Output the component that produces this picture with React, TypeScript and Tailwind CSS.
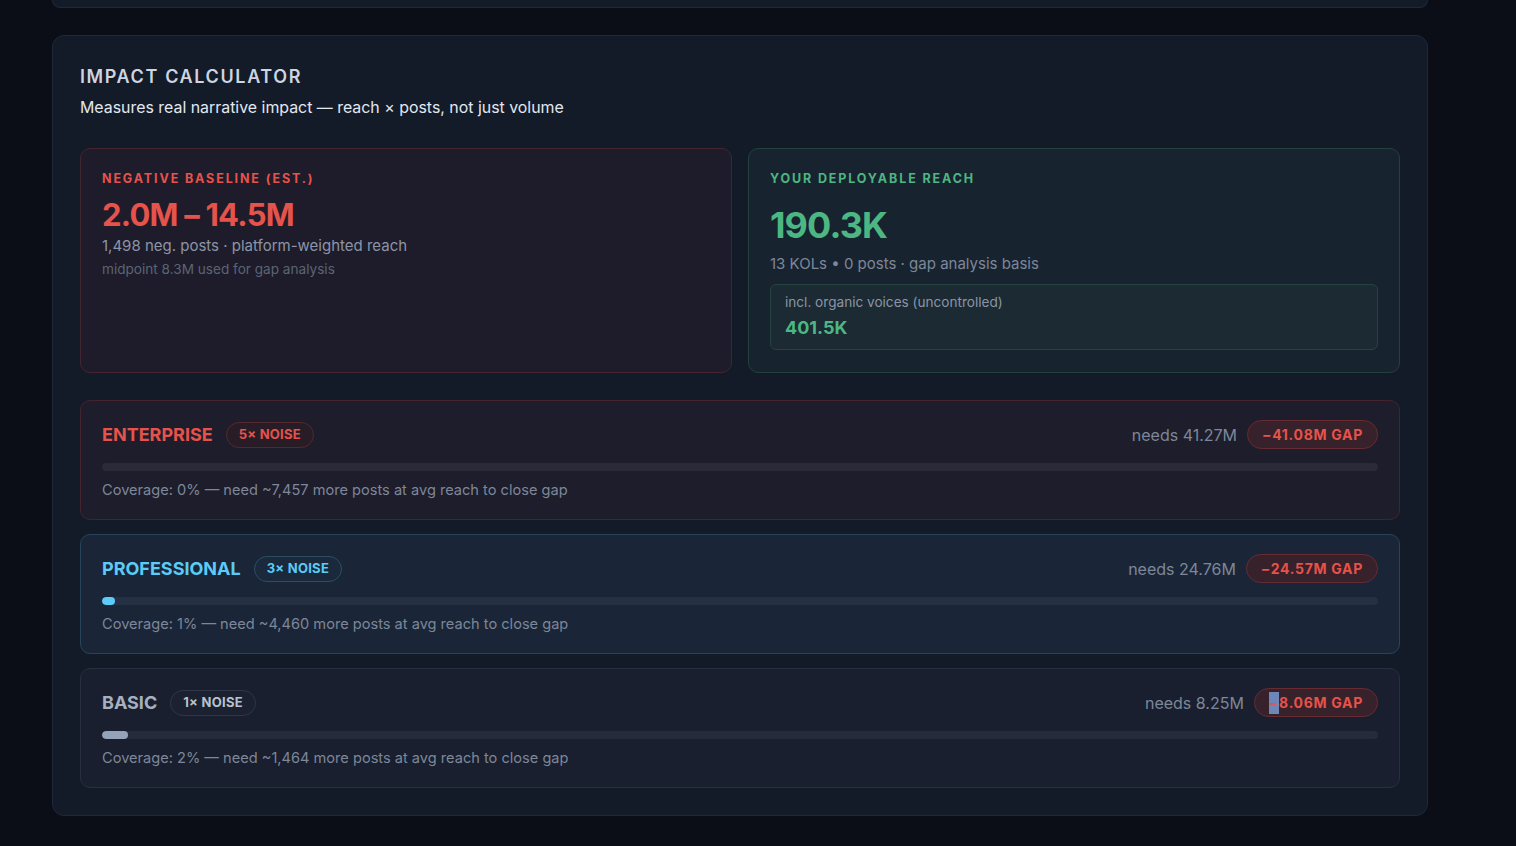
import React from 'react';

type Tier = {
  name: string;
  noise: string;
  needs: string;
  gap: string;
  coverage: number;
  posts: string;
  box: string;
  title: string;
  badge: string;
  track: string;
  fill: string;
  highlightMinus?: boolean;
};

const tiers: Tier[] = [
  {
    name: 'ENTERPRISE',
    noise: '5× NOISE',
    needs: '41.27M',
    gap: '41.08M',
    coverage: 0,
    posts: '7,457',
    box: 'bg-[#1e1d2b] border-[#44242f]',
    title: 'text-[#e5534b]',
    badge: 'bg-[#281d27] border-[#55282f] text-[#e5534b]',
    track: 'bg-[#2a2a38]',
    fill: 'bg-[#e5534b]',
  },
  {
    name: 'PROFESSIONAL',
    noise: '3× NOISE',
    needs: '24.76M',
    gap: '24.57M',
    coverage: 1,
    posts: '4,460',
    box: 'bg-[#1a2637] border-[#264559]',
    title: 'text-[#5ccbf8]',
    badge: 'bg-[#1a2a3c] border-[#2b4e64] text-[#5ccbf8]',
    track: 'bg-[#243044]',
    fill: 'bg-[#5ccbf8]',
  },
  {
    name: 'BASIC',
    noise: '1× NOISE',
    needs: '8.25M',
    gap: '8.06M',
    coverage: 2,
    posts: '1,464',
    box: 'bg-[#191f2e] border-[#262f40]',
    title: 'text-[#a7b0bf]',
    badge: 'bg-[#1b2130] border-[#2e3747] text-[#b9c1cd]',
    track: 'bg-[#242c3b]',
    fill: 'bg-[#94a3b8]',
    highlightMinus: true,
  },
];

const TierRow = ({ tier }: { tier: Tier }) => (
  <div className={`rounded-[10px] border px-[21px] pt-[19px] pb-[19px] ${tier.box}`}>
    <div className="flex items-center justify-between h-[29px]">
      <div className="flex items-center gap-[13px]">
        <span className={`text-[18px] font-bold ${tier.title}`}>{tier.name}</span>
        <span className={`rounded-full border px-[12px] h-[26px] flex items-center text-[13px] font-bold tracking-[0.02em] ${tier.badge}`}>
          {tier.noise}
        </span>
      </div>
      <div className="flex items-center gap-[10px]">
        <span className="text-[16px] text-[#7d8799]">needs {tier.needs}</span>
        <span className="rounded-full border border-[#672b33] bg-[#37212a] px-[14px] h-[29px] flex items-center text-[14px] font-bold tracking-[0.05em] text-[#e5534b]">
          {tier.highlightMinus ? (
            <span className="inline-block h-[22px] leading-[22px] bg-[#6f86b8]">−</span>
          ) : (
            '−'
          )}
          {tier.gap} GAP
        </span>
      </div>
    </div>
    <div className={`mt-[14px] h-[8px] rounded-full overflow-hidden ${tier.track}`}>
      <div className={`h-full rounded-full ${tier.fill}`} style={{ width: `${tier.coverage}%` }} />
    </div>
    <p className="mt-[9px] text-[14.6px] leading-[20px] text-[#7d8799]">
      Coverage: {tier.coverage}% — need ~{tier.posts} more posts at avg reach to close gap
    </p>
  </div>
);

const App = () => {
  return (
    <div className="min-h-screen bg-[#0b0e17] pl-[52px] font-['Inter',sans-serif]">
      {/* tail of the card above */}
      <div className="w-[1376px] h-[8px] rounded-b-[12px] border-x border-b border-[#1e293b] bg-[#131a28]" />

      <section className="mt-[27px] w-[1376px] rounded-[12px] border border-[#1e293b] bg-[#131a28] p-[27px]">
        <h2 className="text-[18px] leading-[28px] font-semibold tracking-[0.09em] text-[#cdd5e0]">IMPACT CALCULATOR</h2>
        <p className="mt-[5px] text-[15.9px] leading-[24px] text-[#e2e8f0]">
          Measures real narrative impact — reach × posts, not just volume
        </p>

        <div className="mt-[28px] grid grid-cols-2 gap-[16px]">
          <div className="rounded-[10px] border border-[#44242f] bg-[#1e1c2a] px-[21px] pt-[22px]">
            <div className="text-[12.5px] leading-[16px] font-bold tracking-[0.15em] text-[#e5534b]">NEGATIVE BASELINE (EST.)</div>
            <div className="mt-[11px] text-[31px] leading-[34px] font-bold tracking-tight text-[#e5534b]">2.0M – 14.5M</div>
            <div className="mt-[4px] text-[15px] leading-[20px] text-[#8b95a7]">1,498 neg. posts · platform-weighted reach</div>
            <div className="mt-[4px] text-[13.6px] leading-[18px] text-[#5b6475]">midpoint 8.3M used for gap analysis</div>
          </div>

          <div className="rounded-[10px] border border-[#23403c] bg-[#182330] px-[21px] pt-[22px] pb-[22px]">
            <div className="text-[12.5px] leading-[16px] font-bold tracking-[0.15em] text-[#4cb782]">YOUR DEPLOYABLE REACH</div>
            <div className="mt-[18px] text-[36px] leading-[40px] font-bold tracking-tight text-[#4cb782]">190.3K</div>
            <div className="mt-[9px] text-[15px] leading-[20px] text-[#7d8799]">13 KOLs • 0 posts · gap analysis basis</div>
            <div className="mt-[10px] rounded-[6px] border border-[#26443f] bg-[#1b2a33] px-[14px] pt-[8px] pb-[9px]">
              <div className="text-[13.6px] leading-[18px] text-[#8b95a7]">incl. organic voices (uncontrolled)</div>
              <div className="mt-[5px] text-[18px] leading-[24px] font-bold text-[#4cb782]">401.5K</div>
            </div>
          </div>
        </div>

        <div className="mt-[27px] flex flex-col gap-[14px]">
          {tiers.map((t) => (
            <TierRow key={t.name} tier={t} />
          ))}
        </div>
      </section>
    </div>
  );
};

export default App;
